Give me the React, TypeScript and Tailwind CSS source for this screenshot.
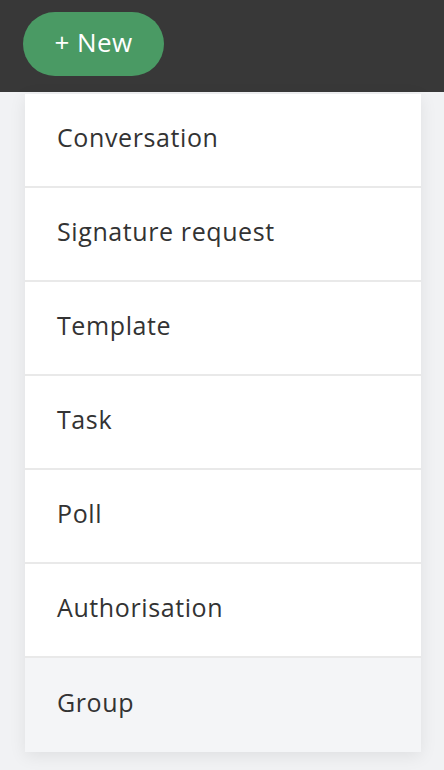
import React from 'react'

const items = ['Conversation', 'Signature request', 'Template', 'Task', 'Poll', 'Authorisation', 'Group']

export default function App() {
  return (
    <div className="min-h-[770px] bg-[#f1f2f4]" style={{ fontFamily: '"Open Sans", Lato, sans-serif' }}>
      {/* Top bar */}
      <div className="h-[92px] bg-[#383838] flex items-start pt-[12px] pl-[23px]">
        <button className="h-[64px] w-[141px] rounded-full bg-[#4a9a64] text-white text-[26px] tracking-[0.4px] leading-none flex items-center justify-center pb-[4px]">
          + New
        </button>
      </div>

      {/* Dropdown */}
      <div className="mt-[2px] ml-[25px] w-[396px] bg-white shadow-[0_4px_16px_rgba(0,0,0,0.08)]">
        {items.map((label, i) => {
          const last = i === items.length - 1
          return (
            <div
              key={label}
              className={
                last
                  ? 'h-[94px] flex items-center pl-[32px] pb-[5px] text-[25px] tracking-[0.6px] leading-none text-[#333333] bg-[#f4f5f7]'
                  : 'h-[94px] flex items-center pl-[32px] pb-[5px] text-[25px] tracking-[0.6px] leading-none text-[#333333] border-b-2 border-[#e9e9e9]'
              }
            >
              {label}
            </div>
          )
        })}
      </div>
    </div>
  )
}
